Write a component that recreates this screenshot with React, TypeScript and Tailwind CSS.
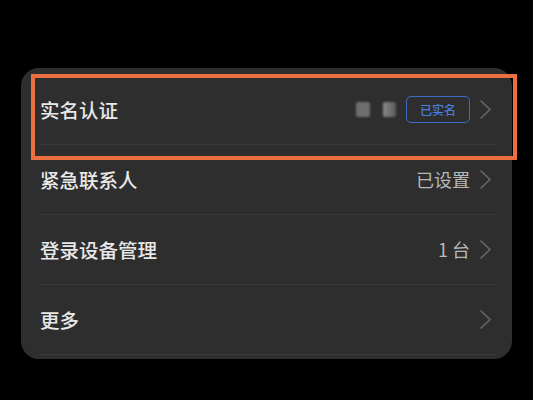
import React from "react";

const FONT = { fontFamily: '"Noto Sans CJK SC", "Noto Sans", sans-serif' };

function Chevron() {
  return (
    <svg width="13" height="21" viewBox="0 0 13 21" className="shrink-0">
      <polyline
        points="2,2 11,10.5 2,19"
        fill="none"
        stroke="#666666"
        strokeWidth="1.7"
        strokeLinecap="round"
        strokeLinejoin="round"
      />
    </svg>
  );
}

interface Row {
  title: string;
  value?: React.ReactNode;
}

const ROWS: Row[] = [
  {
    title: "实名认证",
    value: (
      <div className="flex items-center">
        {/* blurred masked info */}
        <span className="h-[15px] w-[14px] rounded-[2px] bg-[#6e6e6e] blur-[1px]" />
        <span className="ml-[13px] h-[15px] w-[13px] rounded-[2px] bg-gradient-to-r from-[#8a8a8a] to-[#5a5a5a] blur-[1px]" />
        <span className="ml-[10px] flex h-[27px] items-center rounded-[5px] border-[1.5px] border-[#3b6cc4] px-[13px] text-[12px] font-medium text-[#4a7fdc]">
          已实名
        </span>
      </div>
    ),
  },
  { title: "紧急联系人", value: <span className="text-[18px] text-[#b8b8b8]">已设置</span> },
  { title: "登录设备管理", value: <span className="text-[18px] text-[#b8b8b8]">1 台</span> },
  { title: "更多" },
];

export default function App() {
  return (
    <div className="relative h-[400px] w-[533px] overflow-hidden bg-black" style={FONT}>
      <div className="mx-[21px] mt-[68px] rounded-[18px] bg-[#2e2e2e] pb-[4px] pt-[7px]">
        {ROWS.map((row) => (
          <div
            key={row.title}
            className="ml-[19px] mr-[16px] flex h-[70px] items-center border-b border-[#3a3a3a] pr-[4px]"
          >
            <span className="flex-1 text-[19.5px] font-medium text-[#e8e8e8]">{row.title}</span>
            {row.value}
            <span className="ml-[9px]">
              <Chevron />
            </span>
          </div>
        ))}
      </div>

      {/* highlight box */}
      <div className="absolute left-[31px] top-[74px] h-[86px] w-[486px] border-[4px] border-[#ec703f]" />
    </div>
  );
}
